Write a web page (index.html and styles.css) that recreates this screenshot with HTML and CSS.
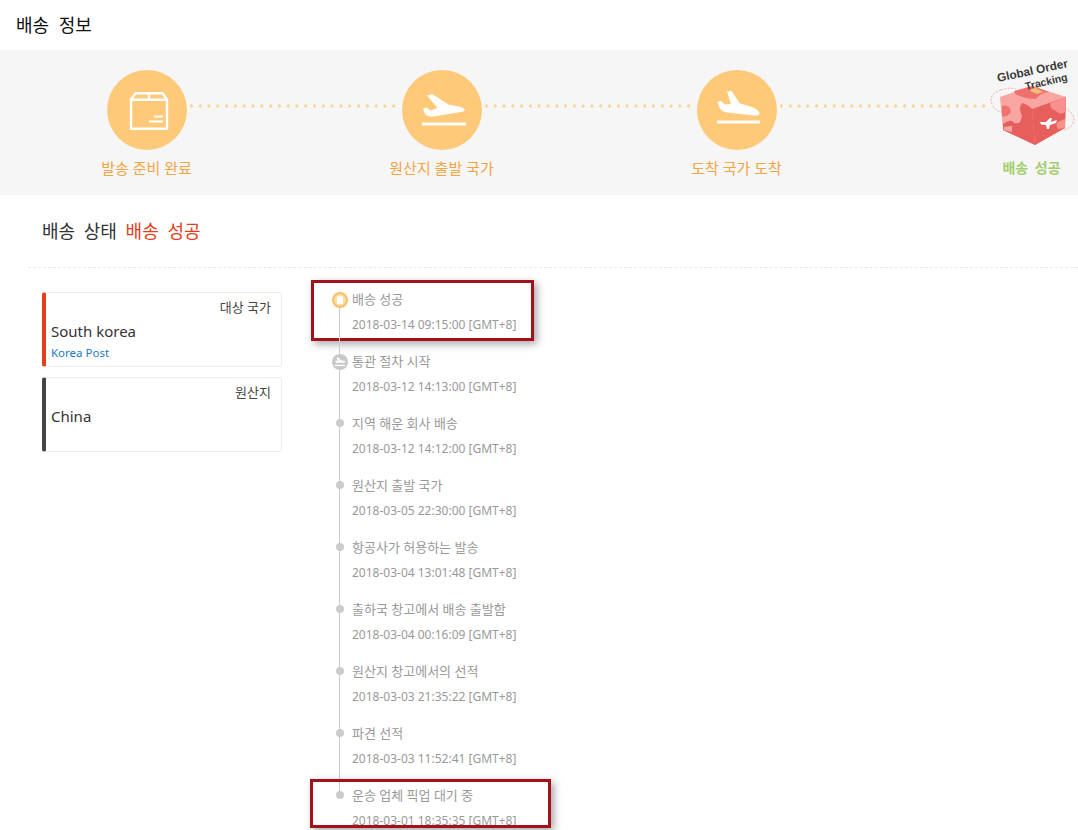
FILE: index.html
```html
<!DOCTYPE html>
<html lang="ko">
<head>
    <meta charset="UTF-8">
    <meta name="viewport" content="width=device-width, initial-scale=1.0">
    <title>배송 정보</title>
    <link rel="stylesheet" href="styles.css">
</head>
<body>

<h1 class="page-title">배송 정보</h1>

<div class="steps">
    <div class="step">
        <div class="step-circle">
            <svg width="80" height="80" viewBox="0 0 80 80" fill="none" stroke="#fff" stroke-width="2.4">
                <path d="M24 29.5 L28.5 23.2 H55.5 L60 29.5 V58.8 H24 Z"/>
                <path d="M24 29.8 H60 M42 23 V29.8"/>
                <path d="M47 46.5 H56 M42 51.5 H56" stroke-width="2.2"/>
            </svg>
        </div>
        <div class="step-label">발송 준비 완료</div>
    </div>
    <div class="step">
        <div class="step-circle">
            <svg width="80" height="80" viewBox="0 0 80 80" fill="#fff">
                <path d="M25 25.5 L30 24 L46.5 34.5 L57 36.5 Q63 38 62.8 40.2 Q62 41.8 57 42.2 L32 46.5 Q24 47.5 22 42 L21 38.5 L24.5 37.6 L28.5 40.6 L35.5 38 Z"/>
                <rect x="20" y="52.5" width="44" height="3"/>
            </svg>
        </div>
        <div class="step-label">원산지 출발 국가</div>
    </div>
    <div class="step">
        <div class="step-circle">
            <svg width="80" height="80" viewBox="0 0 80 80" fill="#fff">
                <path d="M30 21.5 L34.5 21 L43 33.5 L53 36.5 Q61 39 62.5 43 Q62.5 46 57 45.5 L30 42.5 Q23 41.5 21.5 34.5 L20.5 32 L23.5 30.8 L28 34.5 L34 34 Z"/>
                <rect x="20" y="50.5" width="43" height="3"/>
            </svg>
        </div>
        <div class="step-label">도착 국가 도착</div>
    </div>
    <div class="step step-done">
        <div class="step-logo">
            <svg width="80" height="80" viewBox="992 70 80 80">
                <path d="M1000 97 L1032 86 L1066 97 L1065 128 L1035 145 L1003 130 Z" fill="#f9a5a2"/>
                <!-- right face -->
                <path d="M1032 109 L1066 97 L1065 128 L1035 145 Z" fill="#e75f5c"/>
                <path d="M1050 103 L1066 97 L1065.5 112 Q1060 116 1056 111 Q1050 109 1050 103 Z" fill="#f78f8c"/>
                <path d="M1058 129 Q1054 123 1060 121 L1065 119 L1065 128 Z" fill="#f78f8c"/>
                <!-- left face blobs -->
                <path d="M1002 106 Q1010 104 1011 112 Q1006 118 1002 116 Z" fill="#ee7370"/>
                <path d="M1003 124 Q1012 118 1014 123 Q1021 125 1022 116 Q1018 108 1022 103 Q1029 105 1032 109 L1035 145 L1003 130 Z" fill="#e75f5c"/>
                <path d="M1004 127 L1012 126 L1012 132 L1003.5 130 Z" fill="#f9a5a2"/>
                <!-- top face -->
                <path d="M1014 91 L1032 86 L1049 92 Q1040 93 1036 99 Q1026 99 1020 96 Q1015 95 1014 91 Z" fill="#ee6f6c"/>
                <path d="M1030 91 L1034 87 L1043 92 L1037 94 Z" fill="#f6bb78"/>
                <!-- white plane -->
                <path d="M1040 122 L1046 122 L1050 118 L1052 118 L1051 122 L1057 120 L1056 123 L1050 125 L1049 129 L1047 129 L1046 125 L1041 124.5 Z" fill="#fff"/>
                <!-- route rings -->
                <path d="M1001 90 Q988 94 992 104 Q995 112 1003 112" fill="none" stroke="#ee8b8b" stroke-width=".7" stroke-dasharray="2 1.5"/>
                <path d="M1001 90 Q1008 87 1016 89" fill="none" stroke="#ee8b8b" stroke-width=".7" stroke-dasharray="2 1.5"/>
                <path d="M1065 108 Q1076 114 1073 123 Q1071 128 1064 130" fill="none" stroke="#ee8b8b" stroke-width=".7" stroke-dasharray="2 1.5"/>
                <text class="logo-text" transform="translate(998 82) rotate(-12)">Global Order</text>
                <text class="logo-text logo-text-small" transform="translate(1026 90) rotate(-13)">Tracking</text>
            </svg>
        </div>
        <div class="step-label">배송 성공</div>
    </div>
</div>

<h2 class="status-title">배송 상태 <span class="status-value">배송 성공</span></h2>

<div class="content">
    <div class="cards">
        <div class="card card-dest">
            <div class="card-type">대상 국가</div>
            <div class="card-name">South korea</div>
            <div class="card-carrier">Korea Post</div>
        </div>
        <div class="card card-origin">
            <div class="card-type">원산지</div>
            <div class="card-name">China</div>
        </div>
    </div>

    <ul class="timeline">
        <li class="event event-icon">
            <svg class="event-svg" width="16" height="16" viewBox="0 0 16 16">
                <circle cx="8" cy="8" r="7" fill="#fddca8" stroke="#fbbf66" stroke-width="2"/>
                <path d="M5 6 L6 4 H10 L11 6 V12 H5 Z" fill="#fff"/>
            </svg>
            <div class="event-title">배송 성공</div>
            <div class="event-date">2018-03-14 09:15:00 [GMT+8]</div>
            <div class="mark mark-first"></div>
        </li>
        <li class="event event-icon">
            <svg class="event-svg" width="16" height="16" viewBox="0 0 16 16">
                <circle cx="8" cy="8" r="8" fill="#c9c9c9"/>
                <path d="M4.5 4 L6 3.6 L9 6.2 L12.5 7 Q14 8 12.5 8.6 L5.5 9 Q3.5 8.5 3.2 7 L4.5 6.6 L5.5 7 L6.2 6.6 Z" fill="#fff"/>
                <rect x="3" y="10.8" width="10" height="1.2" fill="#fff"/>
            </svg>
            <div class="event-title">통관 절차 시작</div>
            <div class="event-date">2018-03-12 14:13:00 [GMT+8]</div>
        </li>
        <li class="event">
            <div class="event-title">지역 해운 회사 배송</div>
            <div class="event-date">2018-03-12 14:12:00 [GMT+8]</div>
        </li>
        <li class="event">
            <div class="event-title">원산지 출발 국가</div>
            <div class="event-date">2018-03-05 22:30:00 [GMT+8]</div>
        </li>
        <li class="event">
            <div class="event-title">항공사가 허용하는 발송</div>
            <div class="event-date">2018-03-04 13:01:48 [GMT+8]</div>
        </li>
        <li class="event">
            <div class="event-title">출하국 창고에서 배송 출발함</div>
            <div class="event-date">2018-03-04 00:16:09 [GMT+8]</div>
        </li>
        <li class="event">
            <div class="event-title">원산지 창고에서의 선적</div>
            <div class="event-date">2018-03-03 21:35:22 [GMT+8]</div>
        </li>
        <li class="event">
            <div class="event-title">파견 선적</div>
            <div class="event-date">2018-03-03 11:52:41 [GMT+8]</div>
        </li>
        <li class="event">
            <div class="event-title">운송 업체 픽업 대기 중</div>
            <div class="event-date">2018-03-01 18:35:35 [GMT+8]</div>
            <div class="mark mark-last"></div>
        </li>
    </ul>
</div>

<div class="cut-note">한 패키지 해요</div>

</body>
</html>
```

FILE: styles.css
```css
html, body {
    height: 830px;
    overflow: hidden;
}

body {
    position: relative;
    margin: 0;
    background-color: #fff;
    color: #333;
    font-family: "Noto Sans", "Noto Sans CJK KR", sans-serif;
}

.page-title {
    margin: 0;
    height: 50px;
    padding-left: 16px;
    font-size: 18px;
    font-weight: 400;
    line-height: 50px;
    word-spacing: 5px;
    color: #111;
}

/* steps band */
.steps {
    display: flex;
    height: 145px;
    overflow: hidden;
    background-color: #f6f6f6;
}

.step {
    position: relative;
    flex: 0 0 295px;
    display: flex;
    flex-direction: column;
    align-items: center;
    padding-top: 20px;
}

.step:first-child {
    margin-left: -1px;
}

.step::after {
    content: "";
    position: absolute;
    top: 54px;
    left: 188px;
    width: 213px;
    height: 4px;
    background-image: radial-gradient(circle, #fbd690 1.5px, transparent 1.8px);
    background-size: 8.8px 4px;
}

.step-done::after {
    display: none;
}

.step-circle {
    width: 80px;
    height: 80px;
    border-radius: 50%;
    background-color: #fec979;
}

.step-logo {
    width: 80px;
    height: 80px;
}

.step-logo svg {
    overflow: visible;
}

.logo-text {
    font-family: "Liberation Sans", sans-serif;
    font-size: 11.8px;
    font-weight: 700;
    fill: #3a3a3a;
}

.logo-text-small {
    font-size: 10.5px;
}

.step-label {
    margin-top: 8px;
    font-size: 15px;
    line-height: 20px;
    color: #f2a545;
}

.step-done .step-label {
    font-size: 14px;
    font-weight: 700;
    word-spacing: 3px;
    color: #a3cf6f;
}

/* status */
.status-title {
    margin: 0 0 0 28px;
    height: 72px;
    padding-left: 14px;
    border-bottom: 1px dashed #e8e8e8;
    font-size: 18px;
    font-weight: 400;
    line-height: 72px;
    word-spacing: 4px;
}

.status-value {
    color: #e2401c;
}

.content {
    display: flex;
    padding: 24px 0 0 42px;
}

.cards {
    width: 240px;
    margin-right: 58px;
}

.card {
    box-sizing: border-box;
    height: 75px;
    margin-bottom: 10px;
    padding: 6px 10px 0 5px;
    border: 1px solid #eee;
    border-left: 4px solid #444;
    border-radius: 3px;
}

.card-dest {
    border-left-color: #e2401c;
}

.card-type {
    font-size: 13px;
    line-height: 17px;
    text-align: right;
    color: #444;
}

.card-name {
    margin-top: 3px;
    font-size: 15px;
    line-height: 24px;
}

.card-carrier {
    font-size: 11.5px;
    line-height: 20px;
    color: #1c78c8;
}

/* timeline */
.timeline {
    margin: -5px 0 0;
    padding: 0 0 0 12px;
    list-style: none;
}

.event {
    position: relative;
    height: 62px;
    font-size: 12px;
    color: #999;
}

.event::before {
    content: "";
    position: absolute;
    top: 8px;
    left: -16px;
    width: 8px;
    height: 8px;
    border-radius: 50%;
    background-color: #ccc;
}

.event::after {
    content: "";
    position: absolute;
    top: 12px;
    bottom: -12px;
    left: -13px;
    width: 1px;
    background-color: #ccc;
}

.event:last-child::after {
    display: none;
}

.event-icon::before {
    display: none;
}

.event-svg {
    position: absolute;
    top: 5px;
    left: -20px;
    z-index: 1;
}

.event-title {
    font-size: 13px;
    line-height: 24px;
}

.event-date {
    margin-top: 2px;
    line-height: 24px;
}

/* red annotation boxes */
.mark {
    position: absolute;
    box-sizing: border-box;
    border: 3px solid #a3121a;
    box-shadow: 3px 3px 8px rgba(0, 0, 0, 0.35);
}

.mark-first {
    top: -7px;
    left: -41px;
    width: 223px;
    height: 61px;
}

.mark-last {
    top: -4px;
    left: -42px;
    width: 241px;
    height: 49px;
}

.cut-note {
    position: absolute;
    top: 827px;
    right: 0;
    font-size: 13px;
    color: #333;
}
```
